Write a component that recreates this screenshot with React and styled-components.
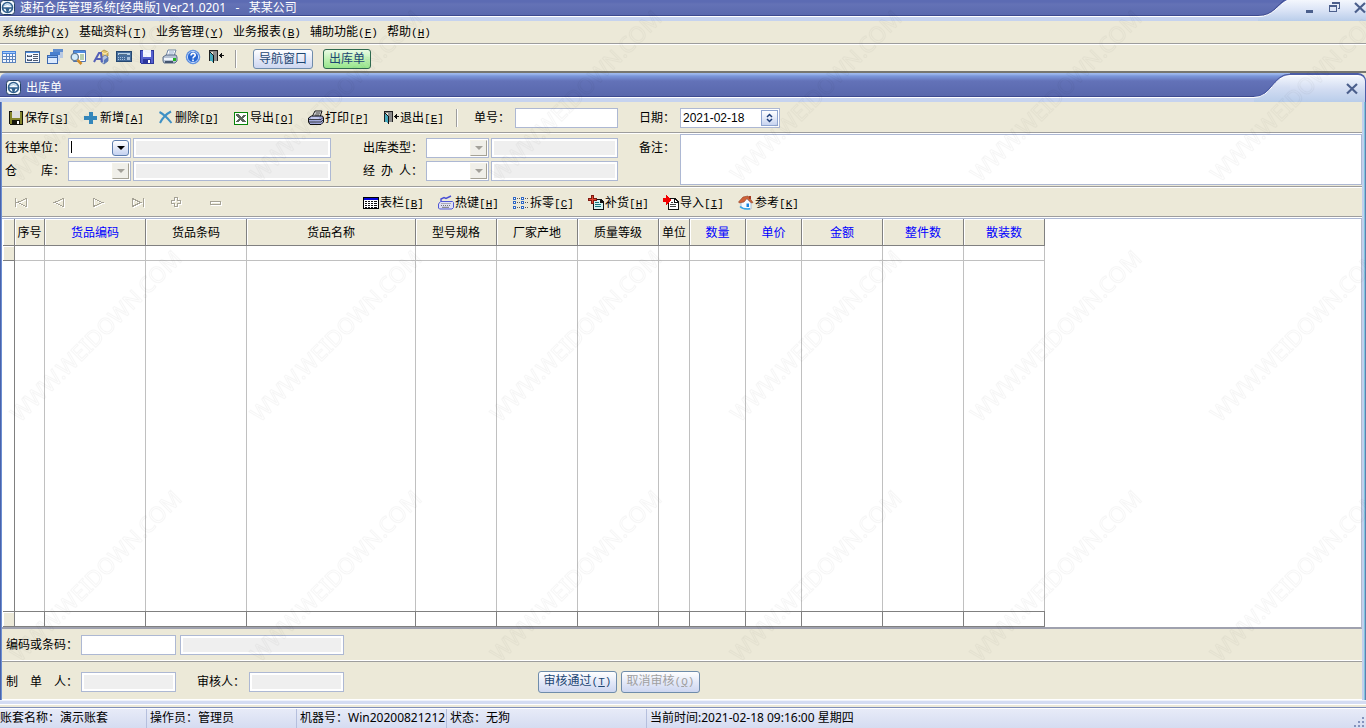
import React from 'react';
import styled, { createGlobalStyle, css } from 'styled-components';

const GlobalStyle = createGlobalStyle`
  * {
    box-sizing: border-box;
  }

  body {
    margin: 0;
    background: #ece9d8;
    font-family: 'Liberation Sans', 'Noto Sans CJK SC', sans-serif;
    font-size: 12px;
    line-height: 16px;
    color: #000;
  }

  button,
  input,
  select,
  textarea {
    font: inherit;
    color: inherit;
    margin: 0;
    padding: 0;
    border: 0;
    border-radius: 0;
    background: none;
    outline: none;
  }
`;

const Page = styled.div`
  position: relative;
  display: flex;
  flex-direction: column;
  height: 100vh;
  min-height: 480px;
  overflow: hidden;
`;

const Watermark = styled.svg`
  position: absolute;
  inset: 0;
  width: 100%;
  height: 100%;
  pointer-events: none;
`;

/* ---------- title bars ---------- */

const TitleText = styled.h1`
  flex: 1;
  margin: 0;
  font-family: 'Noto Sans', 'Noto Sans CJK SC', sans-serif;
  font-size: 12px;
  font-weight: 400;
  line-height: 16px;
  color: #fff;
  white-space: pre;
`;

const AppTitle = styled.header`
  display: flex;
  height: 21px;
  flex: none;
  background: linear-gradient(
    #5c6bb3 0 2px,
    #6472b6 4px,
    #5a69ae 15px,
    #3d4a8f 15px 16px,
    #fff 16px 17px,
    #c6d3ef 17px
  );
`;

const AppTitleEnd = styled.div`
  display: flex;
  align-items: flex-start;
  justify-content: flex-end;
  gap: 13px;
  width: 78px;
  background: linear-gradient(#f4f7fd, #dbe4f6 10px, #b9cdea);
`;

const WindowTitle = styled.div`
  display: flex;
  align-items: center;
  height: 29px;
  flex: none;
  padding-left: 6px;
  border-radius: 6px 8px 0 0;
  background: linear-gradient(
    #9db8ec 0 1px,
    #7b97da 3px,
    #6372b8 8px,
    #5867ac 23px,
    #3d4a8f 23px 24px,
    #fff 24px 25px,
    #c6d3ef 25px
  );
  overflow: hidden;
`;

const WindowTitleEnd = styled.div`
  display: flex;
  align-items: center;
  justify-content: flex-end;
  width: 76px;
  height: 29px;
  padding-right: 7px;
  border-top: 2px solid #4c5da6;
  border-right: 1px solid #4c5da6;
  border-radius: 0 8px 0 0;
  background: linear-gradient(#fff 0 1px, #f0f4fc 2px, #d3ddf2 14px, #b9cdea);
`;

const CaptionButton = styled.button`
  display: block;
  width: 12px;
  height: 16px;
`;

const TitleLogo = styled.span`
  display: block;
  width: 20px;
  height: 16px;
`;

/* ---------- menu and toolbars ---------- */

const MenuBar = styled.nav`
  display: flex;
  align-items: center;
  height: 24px;
  flex: none;
  padding-left: 2px;
  border-bottom: 1px solid #fff;
  box-shadow: inset 0 -1px 0 #9d9d9d;
`;

const MenuItem = styled.button`
  width: 77px;
  text-align: left;
  white-space: nowrap;
`;

const Mnemonic = styled.span`
  font-family: 'Liberation Mono', monospace;
  font-size: 11px;
`;

const ToolBar = styled.div`
  display: flex;
  align-items: center;
  height: 28px;
  flex: none;
  padding: 2px 0 0 1px;
  border-bottom: 2px solid #77776f;
`;

const ToolButton = styled.button`
  width: 23px;
  height: 20px;
  padding-bottom: 4px;
`;

const Divider = styled.span`
  width: 2px;
  height: 18px;
  background: linear-gradient(90deg, #9d9d9d 50%, #fff 50%);
  margin: ${p => p.$margin};
`;

const PushButton = styled.button`
  height: ${p => (p.$tall ? 22 : 20)}px;
  width: ${p => p.$width}px;
  border: 1px solid #6f8cab;
  border-radius: 3px;
  background: linear-gradient(#fff, #e4e9f8 50%, #cdd6f0);
  color: #1d4773;
  line-height: 16px;
  white-space: nowrap;

  &:disabled {
    color: #a0a0a0;
  }

  ${p =>
    p.$active &&
    css`
      border-color: #2f6a4f;
      background: linear-gradient(#e9fbe4, #b7efac 60%, #97e58b);
    `}
`;

const Gap = styled.span`
  flex: none;
  width: ${p => p.$size}px;
`;

/* ---------- inner window ---------- */

const Window = styled.section`
  display: flex;
  flex-direction: column;
  flex: 1;
  min-height: 0;
`;

const WindowBody = styled.form`
  display: flex;
  flex-direction: column;
  flex: 1;
  min-height: 0;
  border: 0 solid transparent;
  border-left-width: 2px;
  border-right-width: 4px;
  background:
    linear-gradient(#ece9d8, #ece9d8) padding-box,
    linear-gradient(
        90deg,
        #4a63ab 0 1px,
        #6c8fd2 1px 2px,
        #c9d5f0 2px calc(100% - 4px),
        #c2d0ee calc(100% - 4px) calc(100% - 2px),
        #7cc7dc calc(100% - 2px) calc(100% - 1px),
        #5e7fb0 calc(100% - 1px)
      )
      border-box;
`;

const Band = styled.div`
  display: flex;
  align-items: center;
  flex: none;
  height: ${p => p.$height}px;
  padding: ${p => p.$top || 0}px 0 0 ${p => p.$start}px;
  border-bottom: 1px solid #fff;
  box-shadow: ${p => (p.$last ? 'none' : 'inset 0 -1px 0 #9d9d9d')};
`;

const RaisedBand = styled(Band)`
  border-bottom-color: #9d9d9d;
  box-shadow: inset 0 -1px 0 #fff;
`;

const Action = styled.button`
  display: flex;
  align-items: center;
  gap: 1px;
  width: 75px;
  flex: none;
  text-align: left;
  white-space: nowrap;
`;

const NavButton = styled.button`
  width: 39px;
  height: 16px;
  text-align: left;
`;

const NavGroup = styled.div`
  display: flex;
  width: 349px;
`;

const FieldLabel = styled.label`
  width: ${p => p.$width}px;
  padding-left: ${p => p.$indent || 0}px;
  flex: none;
  white-space: pre;
`;

const TextInput = styled.input`
  width: ${p => p.$width}px;
  height: 20px;
  flex: none;
  padding: 0 2px;
  border: 1px solid #adb8d3;
  background: #fff;

  &:read-only {
    background: #efefef;
    box-shadow: inset 0 0 0 2px #fff;
  }
`;

const FormGrid = styled.div`
  display: grid;
  grid-template-columns: 66px 65px 198px 95px 65px 127px 62px 1fr;
  grid-template-rows: 20px 20px;
  row-gap: 3px;
  align-items: center;
  flex: none;
  height: 54px;
  padding-top: 4px;
  border-bottom: 1px solid #fff;
  box-shadow: inset 0 -1px 0 #9d9d9d;
`;

const Memo = styled.textarea`
  grid-column: 8;
  grid-row: 1 / 3;
  display: block;
  width: 100%;
  height: 51px;
  border: 1px solid #adb8d3;
  background: #fff;
  resize: none;
`;

const ComboWrap = styled.span`
  position: relative;
  display: block;
  width: 63px;
  height: 20px;
  border: 1px solid #adb8d3;
  background: #fff;

  select {
    display: block;
    width: 100%;
    height: 100%;
    appearance: none;
    opacity: 1;
  }
`;

const ComboArrow = styled.span`
  position: absolute;
  top: 1px;
  right: 1px;
  width: 17px;
  height: 16px;
  border: 1px solid;
  border-color: ${p => (p.$on ? '#5f7fae' : '#f4f2e8 #a5a295 #a5a295 #f4f2e8')};
  border-radius: ${p => (p.$on ? 3 : 0)}px;
  background: ${p => (p.$on ? 'linear-gradient(#fff, #c5d2f0)' : '#f0efe9')};
  pointer-events: none;

  &:after {
    content: '';
    position: absolute;
    left: 4px;
    top: 5px;
    border: 4px solid transparent;
    border-bottom-width: 0;
    border-top-color: ${p => (p.$on ? '#000' : '#a3a19a')};
  }
`;

const Caret = styled.span`
  position: absolute;
  left: 2px;
  top: 2px;
  width: 1px;
  height: 12px;
  background: #000;
`;

const DateBox = styled.span`
  display: flex;
  align-items: center;
  justify-content: space-between;
  width: 100px;
  height: 20px;
  padding: 0 1px 0 2px;
  border: 1px solid #adb8d3;
  background: #fff;

  input {
    width: 70px;
  }

  button {
    width: 17px;
    height: 16px;
    border: 1px solid #8fa5d0;
    background: linear-gradient(#fff, #c8d4f0);
  }
`;

/* ---------- data grid ---------- */

const GridFrame = styled.div`
  display: flex;
  flex: 1;
  min-height: 0;
  padding-left: 1px;
  border-top: 1px solid #adb8d3;
  border-right: 1px solid #b4b9cd;
  border-bottom: 2px solid #9fa1ae;
  background: #fff;
`;

const Table = styled.table`
  flex: none;
  width: 1042px;
  table-layout: fixed;
  border-collapse: separate;
  border-spacing: 0;

  th,
  td {
    padding: 0;
    border-right: 1px solid #c0c0c0;
  }

  th {
    height: 27px;
    padding-top: 1px;
    border-right-color: #808080;
    border-bottom: 1px solid #808080;
    background: #ece9d8;
    box-shadow: inset 1px 1px 0 #fff;
    font-weight: 400;
    white-space: nowrap;
  }

  td:first-child {
    border-right-color: #808080;
  }

  tfoot td {
    height: 16px;
    border-top: 1px solid #808080;
    border-right-color: #808080;
    border-bottom: 1px solid #808080;
  }
`;

const HeadCell = styled.th`
  color: ${p => (p.$key ? '#0000ff' : '#000')};
`;

const EntryRow = styled.tr`
  height: 15px;

  td {
    border-bottom: 1px solid #c0c0c0;
  }

  td:first-child {
    background: #ece9d8;
    box-shadow: inset 1px 1px 0 #fff;
    border-bottom-color: #808080;
  }
`;

const TotalRow = styled.tr`
  td:first-child {
    background: #ece9d8;
    box-shadow: inset 1px 1px 0 #fff;
  }
`;

const BottomEdge = styled.div`
  flex: none;
  height: 8px;
  background: linear-gradient(
    #eef2fb 0 1px,
    #d4dcf2 1px 4px,
    #fff 4px 5px,
    #ece9d8 5px 7px,
    #7f8fb9 7px
  );
`;

/* ---------- status bar ---------- */

const StatusBar = styled.footer`
  display: flex;
  align-items: center;
  flex: none;
  height: 20px;
  border-top: 1px solid #fff;
  background: linear-gradient(#e7ebf8, #d5dcf1);
  font-family: 'Noto Sans', 'Noto Sans CJK SC', sans-serif;
`;

const StatusCell = styled.span`
  width: ${p => (p.$width ? `${p.$width}px` : 'auto')};
  flex: ${p => (p.$width ? 'none' : 1)};
  height: 19px;
  padding-left: ${p => (p.$first ? 0 : 3)}px;
  line-height: 17px;
  border-right: 1px solid ${p => (p.$width ? '#b5bfdd' : 'transparent')};
  white-space: pre;
  overflow: hidden;
`;

/* ---------- icons ---------- */

const IconSvg = styled.svg`
  display: block;
  flex: none;
`;

const Icon = ({ children, smooth }) => (
  <IconSvg
    width="16"
    height="16"
    viewBox="0 0 16 16"
    fill="none"
    shapeRendering={smooth ? 'auto' : 'crispEdges'}
    aria-hidden="true"
  >
    {children}
  </IconSvg>
);

const LogoIcon = () => (
  <Icon smooth>
    <rect x="0.5" y="0.5" width="14" height="14" rx="3" fill="#f4f9fd" stroke="#23405f" />
    <circle cx="7.5" cy="7.5" r="5" stroke="#2f5f8c" strokeWidth="1.6" />
    <path d="M3 7.2h9v1.6H9.500L8.300 12H6.700L5.500 8.800H3z" fill="#2f5f8c" />
    <path d="M4 5.500q3.500-2 7 0" stroke="#9fc4e0" />
  </Icon>
);

const TableIcon = () => (
  <Icon>
    <path d="M1 2h14v12H1z" fill="#5b83bd" />
    <path d="M1 2h14v3H1z" fill="#4a86de" />
    <path d="M2 3h12v1H2z" fill="#a5ccf8" />
    <path d="M2 5h3v2H2zM6 5h2v2H6zM9 5h2v2H9zM12 5h2v2h-2zM2 8h3v2H2zM6 8h2v2H6zM9 8h2v2H9zM12 8h2v2h-2zM2 11h3v2H2zM6 11h2v2H6zM9 11h2v2H9zM12 11h2v2h-2z" fill="#f2f7ff" />
  </Icon>
);

const FormIcon = () => (
  <Icon>
    <path d="M1 2h15v12H1z" fill="#456695" />
    <path d="M2 3h13v1H2z" fill="#4d8fe0" />
    <path d="M2 4h13v9H2z" fill="#f4f8ff" />
    <path d="M3 6h5v2H3zM3 10h5v2H3zM9 5h5v1H9zM9 7h5v1H9zM9 9h5v1H9zM9 11h5v1H9z" fill="#4b586e" />
    <path d="M4 6h3v1H4zM4 10h3v1H4z" fill="#a9bdd9" />
  </Icon>
);

const CascadeIcon = () => (
  <Icon>
    <path d="M6 0h10v9H6z" fill="#b8c9e2" />
    <path d="M6 0h10v3H6z" fill="#5f8dcf" />
    <path d="M3 3h10v9H3z" fill="#c9d9f0" />
    <path d="M3 3h10v3H3z" fill="#4a80cf" />
    <path d="M0 6h11v9H0z" fill="#3d69b0" />
    <path d="M1 9h9v5H1z" fill="#dceafd" />
    <path d="M1 7h9v1H1z" fill="#82b4f4" />
  </Icon>
);

const FindIcon = () => (
  <Icon smooth>
    <path d="M3.500 1.500h12v11h-12z" fill="#fff" stroke="#4a72b4" />
    <path d="M4 2h11v2H4z" fill="#4d8de0" />
    <path d="M10 6h4M10 8h4M10 10h4" stroke="#6e9f60" />
    <circle cx="4.800" cy="8" r="3.600" fill="#d5ecfa" stroke="#687f98" strokeWidth="1.400" />
    <path d="m7.500 11 4 4" stroke="#d18b25" strokeWidth="2.600" />
  </Icon>
);

const GoodsIcon = () => (
  <Icon smooth>
    <path d="m8 3 3-2 4 2v4l-4 2-3-2z" fill="#e3c46b" stroke="#957321" strokeWidth=".6" />
    <path d="m8 3 4 2v4M12 5l3-2" stroke="#fff0b5" />
    <path d="m8 9 4-3 3 2v4l-4 3-3-2z" fill="#b4c2de" stroke="#4f6799" strokeWidth=".7" />
    <path d="m11 15 4-3V8l-4 3z" fill="#5877b8" />
    <path d="m1 13 5-9h2l1 9M3 10h6" stroke="#5560b7" strokeWidth="2" />
  </Icon>
);

const CardIcon = () => (
  <Icon>
    <path d="M0 2h16v11H0z" fill="#254872" />
    <path d="M1 3h14v9H1z" fill="#476f9e" />
    <path d="M2 4h12v2H2z" fill="#b8d1e6" />
    <path d="M3 5h8v1H3z" fill="#54718d" />
    <path d="M2 8h1v1H2zM4 8h1v1H4zM6 8h1v1H6zM8 8h1v1H8zM2 10h1v1H2zM4 10h1v1H4zM6 10h1v1H6zM8 10h1v1H8zM11 8h3v3h-3z" fill="#a9c2de" />
  </Icon>
);

const DiskIcon = ({ body = '#5560cf', edge = '#2c379c', label = '#f4f6ff' }) => (
  <Icon>
    <path d="M1 1h14v14H2l-1-1z" fill={edge} />
    <path d="M2 2h12v12H2z" fill={body} />
    <path d="M4 1h8v7H4z" fill={label} />
    <path d="M4 10h8v5H4z" fill={edge} />
    <path d="M9 11h2v3H9z" fill="#fff" />
  </Icon>
);

const PrinterIcon = () => (
  <Icon smooth>
    <path d="m4 7 2-6h8l-2 6z" fill="#fff" stroke="#7186a4" />
    <path d="M7 3h5M6.500 5h5" stroke="#8ca6c9" />
    <path d="m1 8 3-2h10l1 2v4l-2 2H2l-1-2z" fill="#b7c3d4" stroke="#5d6f89" />
    <path d="M2 9h11v2H2z" fill="#f0f5fb" />
    <path d="M11 9h3v3h-3z" fill="#22b520" />
    <path d="M3 12h8v2H3z" fill="#455670" />
  </Icon>
);

const HelpIcon = () => (
  <Icon smooth>
    <circle cx="8" cy="8" r="6.800" fill="#2867d2" stroke="#6797e1" />
    <circle cx="8" cy="8" r="5.600" stroke="#d6e7ff" strokeWidth=".9" />
    <path d="M6 6.500c0-3 4.500-2.600 4.200-.2C10 7.700 8 7.700 8 9.400M8 10.600v1.600" stroke="#fff" strokeWidth="1.600" />
  </Icon>
);

const ExitIcon = () => (
  <Icon>
    <path d="M1 1h9v11H9V3H2v9H1z" fill="#202020" />
    <path d="M2 2h7v1H2z" fill="#858585" />
    <path d="M5 3h4v9H5z" fill="#8c8c8c" />
    <path d="M2 3h1v1h1v1h1v1h1v8H5v-1H4v-1H2z" fill="#111" />
    <path d="M2 4h1v1h1v1h1v7H4v-1H2z" fill="#45a9bd" />
    <path d="M9 6h1v5H9z" fill="#202020" />
    <path d="M11 6h1V5h1V4h1v2h2v1h-2v2h-1V8h-1V7h-1z" fill="#111" />
  </Icon>
);

const PlusIcon = () => (
  <Icon>
    <path d="M6 2h4v4h4v4h-4v4H6v-4H1V6h5z" fill="#3487bb" />
  </Icon>
);

const CrossIcon = () => (
  <Icon smooth>
    <path d="M1.500 2c4 2 8 6 12 11M13 1.500C8 4 4 9 2 13" stroke="#3f91c5" strokeWidth="2" />
  </Icon>
);

const ExcelIcon = () => (
  <Icon>
    <path d="M1 2h14v13H1z" fill="#078407" />
    <path d="M2 3h12v11H2z" fill="#fff" />
    <path d="M3 4h3v1h1v1h1v1h1V6h1V5h3v1h-1v1h-1v1h-1v1h1v1h1v1h1v1H9v-1H8v-1H7v1H6v1H3v-1h1v-1h1V9h1V8H5V7H4V6H3z" fill="#5c665d" />
  </Icon>
);

const PrintIcon = () => (
  <Icon smooth>
    <path d="m4 7 3-6h7l-2 6z" fill="#fff" stroke="#111" />
    <path d="M7.500 3h5M6.500 5h5" stroke="#222" />
    <path d="m.5 8 3-2h11l1 2v4l-2.500 2.500h-11L.5 12z" fill="#a4abde" stroke="#111" />
    <path d="M1 9.500h12l2-2M1 12h12l2-2" stroke="#222" strokeWidth=".8" />
    <path d="M3 8h8" stroke="#e6e8ff" />
  </Icon>
);

const ColumnsIcon = () => (
  <Icon>
    <path d="M0 2h16v12H0z" fill="#000" />
    <path d="M1 3h14v10H1z" fill="#fff" />
    <path d="M1 3h14v2H1z" fill="#0505d8" />
    <path d="M2 6h2v1H2zM5 6h2v1H5zM8 6h2v1H8zM11 6h3v1h-3zM2 8h2v1H2zM5 8h2v1H5zM8 8h2v1H8zM11 8h3v1h-3zM2 10h2v1H2zM5 10h2v1H5zM8 10h2v1H8zM11 10h3v1h-3zM2 12h2v1H2zM5 12h2v1H5zM8 12h2v1H8zM11 12h3v1h-3z" fill="#111" />
  </Icon>
);

const KeyboardIcon = () => (
  <Icon smooth>
    <path d="M3 6V4l3-1.500 2 1 5-2.500" stroke="#4a50d5" strokeWidth="1.400" />
    <path d="M2.500 6.500h12l1 1v5l-1.500 1.500H1.500L.5 13V9z" fill="#e0e0f4" stroke="#5058d5" />
    <path d="M3.500 8.500h10M3 10.500h10" stroke="#777" strokeDasharray="1 1" />
    <path d="M4 12.300h7" stroke="#777" />
  </Icon>
);

const SplitIcon = () => (
  <Icon>
    {[2, 6, 11].map(y => (
      <React.Fragment key={y}>
        <path d={`M0 ${y}h3v3H0zM8 ${y}h3v3H8z`} fill="#3068c4" />
        <path d={`M1 ${y + 1}h1v1H1zM9 ${y + 1}h1v1H9z`} fill="#fff" />
        <path d={`M4 ${y + 1}h1v1H4zM6 ${y + 1}h1v1H6zM12 ${y + 1}h1v1h-1zM14 ${y + 1}h1v1h-1z`} fill="#555" />
      </React.Fragment>
    ))}
  </Icon>
);

const RefillIcon = () => (
  <Icon>
    <path d="M5 4h8l3 3v8H5z" fill="#111" />
    <path d="M6 5h6v3h3v6H6z" fill="#d5f4f4" />
    <path d="M7 7h4v1H7zM7 9h6v1H7zM7 11h6v1H7z" fill="#16777c" />
    <path d="M3 0h3v3h3v3H6v3H3V6H0V3h3z" fill="#7f1c12" />
    <path d="M4 1h1v3h3v1H5v3H4V5H1V4h3z" fill="#e34832" />
  </Icon>
);

const ImportIcon = () => (
  <Icon>
    <path d="M5 3h7l4 4v8H5z" fill="#111" />
    <path d="M6 4h5v4h4v6H6z" fill="#fff" />
    <path d="M12 5h1v1h1v1h-2z" fill="#fff" />
    <path d="M8 7h2v1H8zM7 9h6v1H7zM7 11h6v1H7z" fill="#444" />
    <path d="M0 3h3V0h1l4 5-4 5H3V7H0z" fill="#f20000" />
  </Icon>
);

const HomeIcon = () => (
  <Icon smooth>
    <path d="m3 7 5-4 5 5v6H6l-3-2z" fill="#f7fbff" stroke="#9db4d3" strokeWidth=".8" />
    <path d="m.5 7 4.500-5 5-1 5 6.500-1.500.5-4.500-4.500L6 7 1.500 8z" fill="#cf6238" stroke="#8f4128" strokeWidth=".6" />
    <path d="M11 1h2v3h-2z" fill="#a73b22" />
    <path d="M8.500 8.500H11V12H8.500z" fill="#1684df" />
    <path d="M2 11.500Q5 14.500 12 13.800" stroke="#35a5e5" strokeWidth="1.500" />
  </Icon>
);

// disabled record-navigator glyphs, each with a white shadow one pixel off
const NAV_SHAPES = {
  first: 'M1.500 3v9M12.500 3.500v8l-9-4z',
  prev: 'M10.500 3.500v8l-9-4z',
  next: 'M1.500 3.500v8l9-4z',
  last: 'M1.500 3.500v8l8-4zM12 3v9',
  add: 'M4.500 2.500h3v3h3v3h-3v3h-3v-3h-3v-3h3z',
  remove: 'M1.500 6.500h10v3h-10z',
};

const NavIcon = ({ name }) => (
  <Icon>
    <path d={NAV_SHAPES[name]} stroke="#fff" transform="translate(1 1)" />
    <path d={NAV_SHAPES[name]} stroke="#a5a295" />
  </Icon>
);

const CloseIcon = () => (
  <IconSvg width="12" height="16" viewBox="0 0 12 16" aria-hidden="true">
    <path d="M1 3l10 9.500M11 3L1 12.500" stroke="#4b5f8c" strokeWidth="2.200" />
  </IconSvg>
);

/* ---------- page data ---------- */

const menus = [
  ['系统维护', 'X'],
  ['基础资料', 'T'],
  ['业务管理', 'Y'],
  ['业务报表', 'B'],
  ['辅助功能', 'F'],
  ['帮助', 'H'],
];

const tools = [
  ['表格', TableIcon],
  ['表单', FormIcon],
  ['窗口', CascadeIcon],
  ['查询', FindIcon],
  ['货品', GoodsIcon],
  ['卡片', CardIcon],
  ['保存', DiskIcon],
  ['打印', PrinterIcon],
  ['帮助', HelpIcon],
  ['退出', ExitIcon],
];

const OliveDisk = () => <DiskIcon body="#85852c" edge="#15150c" label="#dedede" />;

const docActions = [
  ['保存', 'S', OliveDisk],
  ['新增', 'A', PlusIcon],
  ['删除', 'D', CrossIcon],
  ['导出', 'O', ExcelIcon],
  ['打印', 'P', PrintIcon],
  ['退出', 'E', ExitIcon],
];

const rowActions = [
  ['表栏', 'B', ColumnsIcon],
  ['热键', 'H', KeyboardIcon],
  ['拆零', 'C', SplitIcon],
  ['补货', 'H', RefillIcon],
  ['导入', 'I', ImportIcon],
  ['参考', 'K', HomeIcon],
];

const columns = [
  ['', 12],
  ['序号', 30],
  ['货品编码', 101, true],
  ['货品条码', 101],
  ['货品名称', 169],
  ['型号规格', 81],
  ['厂家产地', 81],
  ['质量等级', 81],
  ['单位', 31],
  ['数量', 56, true],
  ['单价', 56, true],
  ['金额', 81, true],
  ['整件数', 81, true],
  ['散装数', 81, true],
];

const Key = ({ letter, open = '[', close = ']' }) => (
  <Mnemonic>
    {open}
    <u>{letter}</u>
    {close}
  </Mnemonic>
);

const ActionList = ({ items }) =>
  items.map(([text, letter, Glyph]) => (
    <Action type="button" key={text}>
      <Glyph />
      <span>
        {text}
        <Key letter={letter} />
      </span>
    </Action>
  ));

const Combo = ({ id, active }) => (
  <ComboWrap>
    <select id={id} disabled={!active} />
    {active && <Caret />}
    <ComboArrow $on={active} />
  </ComboWrap>
);

const DataGrid = () => (
  <GridFrame>
    <Table>
      <colgroup>
        {columns.map(([text, width]) => (
          <col key={text} style={{ width }} />
        ))}
      </colgroup>
      <thead>
        <tr>
          {columns.map(([text, , key]) => (
            <HeadCell key={text} $key={key}>
              {text}
            </HeadCell>
          ))}
        </tr>
      </thead>
      <tbody>
        <EntryRow>
          {columns.map(([text]) => (
            <td key={text} />
          ))}
        </EntryRow>
        <tr>
          {columns.map(([text]) => (
            <td key={text} />
          ))}
        </tr>
      </tbody>
      <tfoot>
        <TotalRow>
          {columns.map(([text]) => (
            <td key={text} />
          ))}
        </TotalRow>
      </tfoot>
    </Table>
  </GridFrame>
);

const App = () => {
  return (
    <Page>
      <GlobalStyle />
      <AppTitle>
        <TitleLogo>
          <LogoIcon />
        </TitleLogo>
        <TitleText>{'速拓仓库管理系统[经典版] Ver21.0201   -   某某公司'}</TitleText>
        <IconSvg width="30" height="21" viewBox="0 0 30 21" aria-hidden="true">
          <defs>
            <linearGradient id="capA" x1="0" y1="0" x2="0" y2="21" gradientUnits="userSpaceOnUse">
              <stop offset="0" stopColor="#f4f7fd" />
              <stop offset=".48" stopColor="#dbe4f6" />
              <stop offset="1" stopColor="#b9cdea" />
            </linearGradient>
          </defs>
          <path d="M0 16.500C16 16.500 18 6 30 0V21H0z" fill="url(#capA)" />
          <path d="M0 15.500C16 15.500 18 5 28 -1" fill="none" stroke="#3d4a8f" />
          <path d="M0 16.500C16 16.500 18 6 30 0" fill="none" stroke="#fff" />
        </IconSvg>
        <AppTitleEnd>
          <CaptionButton type="button" aria-label="最小化">
            <IconSvg width="12" height="16" viewBox="0 0 12 16">
              <path d="M2 10h7v3H2z" fill="#4b5f8c" />
            </IconSvg>
          </CaptionButton>
          <CaptionButton type="button" aria-label="还原">
            <IconSvg width="12" height="16" viewBox="0 0 12 16" shapeRendering="crispEdges">
              <path d="M3 2h8v7h-2V8h1V4H3zM0 5h8v7H0zM1 7v4h6V7z" fill="#4b5f8c" fillRule="evenodd" />
            </IconSvg>
          </CaptionButton>
          <CaptionButton type="button" aria-label="关闭">
            <CloseIcon />
          </CaptionButton>
        </AppTitleEnd>
      </AppTitle>

      <MenuBar>
        {menus.map(([text, letter]) => (
          <MenuItem type="button" key={text}>
            {text}
            <Key letter={letter} open="(" close=")" />
          </MenuItem>
        ))}
      </MenuBar>

      <ToolBar>
        {tools.map(([text, Glyph]) => (
          <ToolButton type="button" key={text} aria-label={text}>
            <Glyph />
          </ToolButton>
        ))}
        <Divider $margin="0 16px 0 4px" />
        <PushButton type="button" $width={60}>
          导航窗口
        </PushButton>
        <Gap $size={10} />
        <PushButton type="button" $width={48} $active>
          出库单
        </PushButton>
      </ToolBar>

      <Window>
        <WindowTitle>
          <TitleLogo>
            <LogoIcon />
          </TitleLogo>
          <TitleText as="h2">出库单</TitleText>
          <IconSvg width="36" height="29" viewBox="0 0 36 29" aria-hidden="true">
            <defs>
              <linearGradient id="capB" x1="0" y1="0" x2="0" y2="29" gradientUnits="userSpaceOnUse">
                <stop offset=".08" stopColor="#f4f7fd" />
                <stop offset=".5" stopColor="#d3ddf2" />
                <stop offset="1" stopColor="#b9cdea" />
              </linearGradient>
            </defs>
            <path d="M0 24.500C18 24.500 19 2.500 36 2.500V29H0z" fill="url(#capB)" />
            <path d="M0 23.500C18 23.500 19 1.500 36 1.500" fill="none" stroke="#4c5da6" strokeWidth="1.500" />
            <path d="M0 24.500C18 24.500 19 2.500 36 2.500" fill="none" stroke="#fff" />
          </IconSvg>
          <WindowTitleEnd>
            <CaptionButton type="button" aria-label="关闭">
              <CloseIcon />
            </CaptionButton>
          </WindowTitleEnd>
        </WindowTitle>

        <WindowBody onSubmit={e => e.preventDefault()}>
          <Band $height={32} $top={1} $start={6}>
            <ActionList items={docActions} />
            <Divider $margin="0 16px 0 -2px" />
            <FieldLabel htmlFor="billNo" $width={41}>
              单号：
            </FieldLabel>
            <TextInput id="billNo" $width={103} />
            <FieldLabel htmlFor="billDate" $width={62} $indent={21}>
              日期：
            </FieldLabel>
            <DateBox>
              <input id="billDate" defaultValue="2021-02-18" />
              <button type="button" aria-label="选择日期">
                <IconSvg width="15" height="14" viewBox="0 0 15 14">
                  <path d="M5 6l2.500-2.500L10 6M5 8l2.500 2.500L10 8" fill="none" stroke="#1d3e79" strokeWidth="1.500" />
                </IconSvg>
              </button>
            </DateBox>
          </Band>

          <FormGrid>
            <FieldLabel htmlFor="partner" $indent={3}>
              往来单位：
            </FieldLabel>
            <Combo id="partner" active />
            <TextInput $width={198} readOnly aria-label="往来单位名称" />
            <FieldLabel htmlFor="outType" $indent={32}>
              出库类型：
            </FieldLabel>
            <Combo id="outType" />
            <TextInput $width={127} readOnly aria-label="出库类型名称" />
            <FieldLabel htmlFor="memo" $indent={21}>
              备注：
            </FieldLabel>
            <Memo id="memo" />
            <FieldLabel htmlFor="store" $indent={3}>
              {'仓\u3000\u3000库：'}
            </FieldLabel>
            <Combo id="store" />
            <TextInput $width={198} readOnly aria-label="仓库名称" />
            <FieldLabel htmlFor="handler" $indent={32}>
              {'经\u2002办\u2002人：'}
            </FieldLabel>
            <Combo id="handler" />
            <TextInput $width={127} readOnly aria-label="经办人名称" />
          </FormGrid>

          <Band $height={30} $top={1} $start={12}>
            <NavGroup>
              {Object.keys(NAV_SHAPES).map(name => (
                <NavButton type="button" key={name} aria-label={name} disabled>
                  <NavIcon name={name} />
                </NavButton>
              ))}
            </NavGroup>
            <ActionList items={rowActions} />
          </Band>

          <DataGrid />

          <RaisedBand $height={33} $start={4}>
            <FieldLabel htmlFor="code" $width={75}>
              编码或条码：
            </FieldLabel>
            <TextInput id="code" $width={95} />
            <Gap $size={4} />
            <TextInput $width={164} readOnly aria-label="货品" />
          </RaisedBand>
          <Band $height={38} $top={2} $start={4} $last>
            <FieldLabel htmlFor="maker" $width={75}>
              {'制\u3000单\u3000人：'}
            </FieldLabel>
            <TextInput id="maker" $width={95} readOnly />
            <FieldLabel htmlFor="auditor" $width={73} $indent={21}>
              审核人：
            </FieldLabel>
            <TextInput id="auditor" $width={95} readOnly />
            <Gap $size={194} />
            <PushButton type="button" $width={79} $tall>
              审核通过
              <Key letter="T" open="(" close=")" />
            </PushButton>
            <Gap $size={4} />
            <PushButton type="button" $width={79} $tall disabled>
              取消审核
              <Key letter="Q" open="(" close=")" />
            </PushButton>
          </Band>
        </WindowBody>
        <BottomEdge />
      </Window>

      <StatusBar>
        <StatusCell $width={147} $first>
          账套名称：演示账套
        </StatusCell>
        <StatusCell $width={150}>操作员：管理员</StatusCell>
        <StatusCell $width={150}>机器号：Win20200821212</StatusCell>
        <StatusCell $width={200}>状态：无狗</StatusCell>
        <StatusCell>当前时间:2021-02-18 09:16:00 星期四</StatusCell>
        <IconSvg width="12" height="19" viewBox="0 0 12 19" shapeRendering="crispEdges" aria-hidden="true">
          <path d="M8 8h2v2H8zM4 12h2v2H4zM8 12h2v2H8zM0 16h2v2H0zM4 16h2v2H4zM8 16h2v2H8z" fill="#8593bd" />
        </IconSvg>
      </StatusBar>

      <Watermark aria-hidden="true">
        <defs>
          <pattern id="mark" width="240" height="240" patternUnits="userSpaceOnUse">
            <text
              x="0"
              y="0"
              transform="translate(20 183) rotate(-45)"
              fill="none"
              stroke="#000"
              strokeOpacity=".035"
              fontFamily="Noto Sans, sans-serif"
              fontSize="22"
            >
              WWW.WEIDOWN.COM
            </text>
          </pattern>
        </defs>
        <rect width="100%" height="100%" fill="url(#mark)" />
      </Watermark>
    </Page>
  );
};

export default App;
